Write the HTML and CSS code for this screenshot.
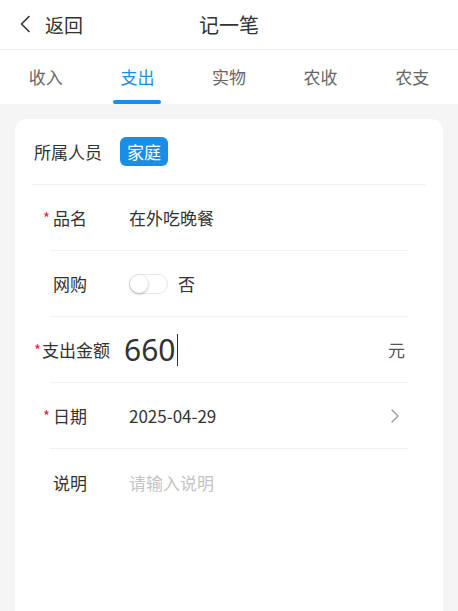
FILE: index.html
```html
<!DOCTYPE html>
<html lang="zh-CN">

<head>
    <meta charset="UTF-8">
    <meta name="viewport" content="width=device-width, initial-scale=1.0">
    <title>记一笔</title>

    <link rel="stylesheet" href="styles.css">

</head>

<body>
    <!-- NAV BAR -->
    <header class="nav-bar">
        <div class="nav-back">
            <svg class="nav-back-icon" width="12" height="18" viewBox="0 0 12 18">
                <path d="M10 1.5 L2.5 9 L10 16.5" fill="none" stroke="#333" stroke-width="1.6" stroke-linecap="round" stroke-linejoin="round" />
            </svg>
            <span>返回</span>
        </div>
        <h1 class="nav-title">记一笔</h1>
        <div></div>
    </header>

    <!-- TABS -->
    <nav class="tabs">
        <div class="tab">收入</div>
        <div class="tab tab-active">支出</div>
        <div class="tab">实物</div>
        <div class="tab">农收</div>
        <div class="tab">农支</div>
    </nav>

    <!-- FORM CARD -->
    <main class="card">
        <div class="member-row">
            <span class="member-label">所属人员</span>
            <span class="member-tag">家庭</span>
        </div>

        <div class="field">
            <span class="field-label"><span class="required">品名</span></span>
            <span class="field-value">在外吃晚餐</span>
        </div>

        <div class="field">
            <span class="field-label">网购</span>
            <span class="field-value switch-wrap">
                <span class="switch"><span class="switch-knob"></span></span>
                <span class="switch-text">否</span>
            </span>
        </div>

        <div class="field">
            <span class="field-label field-label-wide"><span class="required">支出金额</span></span>
            <span class="field-value amount">660<span class="caret"></span></span>
            <span class="unit">元</span>
        </div>

        <div class="field">
            <span class="field-label"><span class="required">日期</span></span>
            <span class="field-value">2025-04-29</span>
            <svg class="arrow" width="10" height="16" viewBox="0 0 10 16">
                <path d="M2 2 L8 8 L2 14" fill="none" stroke="#999" stroke-width="1.3" stroke-linecap="round" stroke-linejoin="round" />
            </svg>
        </div>

        <div class="field field-last">
            <span class="field-label">说明</span>
            <span class="field-value placeholder">请输入说明</span>
        </div>
    </main>
</body>

</html>
```

FILE: styles.css
```css
/* RESET */
* {
    margin: 0;
    padding: 0;
    box-sizing: border-box;
    font-family: "Noto Sans CJK SC", "Noto Sans", sans-serif;
}

/* GERAL */
body {
    background-color: #F5F5F5;
    color: #333;
    overflow: hidden;
}

/* NAV BAR */
.nav-bar {
    display: grid;
    grid-template-columns: 1fr auto 1fr;
    align-items: center;
    height: 50px;
    padding: 0 19px 1px;
    background-color: #FFF;
    border-bottom: 1px solid #EFEFEF;
}

.nav-back {
    display: flex;
    align-items: center;
    font-size: 19px;
}

.nav-back-icon {
    margin-right: 14px;
}

.nav-title {
    font-size: 20px;
    font-weight: normal;
}

/* TABS */
.tabs {
    display: flex;
    height: 54px;
    background-color: #FFF;
}

.tab {
    flex: 1 1 0;
    position: relative;
    display: flex;
    align-items: center;
    justify-content: center;
    padding-bottom: 1px;
    font-size: 17px;
    color: #666;
}

.tab-active {
    color: #1A8DE5;
}

.tab-active::after {
    content: "";
    position: absolute;
    bottom: 0;
    left: 50%;
    width: 48px;
    height: 4px;
    margin-left: -24px;
    border-radius: 2px;
    background-color: #1A8DE5;
}

/* FORM CARD */
.card {
    margin: 15px 15px 0;
    padding: 0 17px;
    min-height: 520px;
    background-color: #FFF;
    border-radius: 12px 12px 0 0;
}

.member-row {
    display: flex;
    align-items: center;
    height: 66px;
    padding-left: 2px;
    border-bottom: 1px solid #F2F2F2;
}

.member-label {
    font-size: 17px;
}

.member-tag {
    margin-left: 18px;
    padding: 2px 7px;
    border-radius: 6px;
    background-color: #1A8DE5;
    color: #FFF;
    font-size: 17px;
    line-height: 25px;
}

.field {
    display: flex;
    align-items: center;
    height: 66px;
    margin: 0 18px;
    border-bottom: 1px solid #F2F2F2;
}

.field-last {
    border-bottom: none;
}

.field-label {
    flex: none;
    width: 72px;
    margin-left: -16px;
    text-align: center;
    white-space: nowrap;
    font-size: 17px;
}

.field-label-wide {
    padding-left: 8px;
}

.required {
    position: relative;
}

.required::before {
    content: "*";
    position: absolute;
    right: 100%;
    top: 2px;
    margin-right: 3px;
    color: #E0284A;
    font-size: 15px;
}

.field-label-wide .required::before {
    margin-right: 1px;
}

.field-value {
    margin-left: 23px;
    font-size: 17px;
    color: #333;
}

.placeholder {
    color: #C4C4C4;
}

/* SWITCH */
.switch-wrap {
    display: flex;
    align-items: center;
}

.switch {
    display: flex;
    align-items: center;
    width: 39px;
    height: 20px;
    border: 1px solid #E6E6E6;
    border-radius: 10px;
    background-color: #FFF;
}

.switch-knob {
    width: 18px;
    height: 18px;
    border-radius: 50%;
    background-color: #FFF;
    box-shadow: 0 1px 3px rgba(0, 0, 0, .3);
}

.switch-text {
    margin-left: 10px;
    font-size: 17px;
}

/* AMOUNT */
.amount {
    display: flex;
    align-items: center;
    margin-left: 18px;
    font-family: "Noto Sans", sans-serif;
    font-size: 30px;
    line-height: 1;
}

.caret {
    width: 1px;
    height: 32px;
    margin-left: 2px;
    background-color: #333;
}

.unit {
    margin-left: auto;
    margin-right: 3px;
    font-size: 17px;
    color: #555;
}

.arrow {
    margin-left: auto;
    margin-right: 8px;
}
```
